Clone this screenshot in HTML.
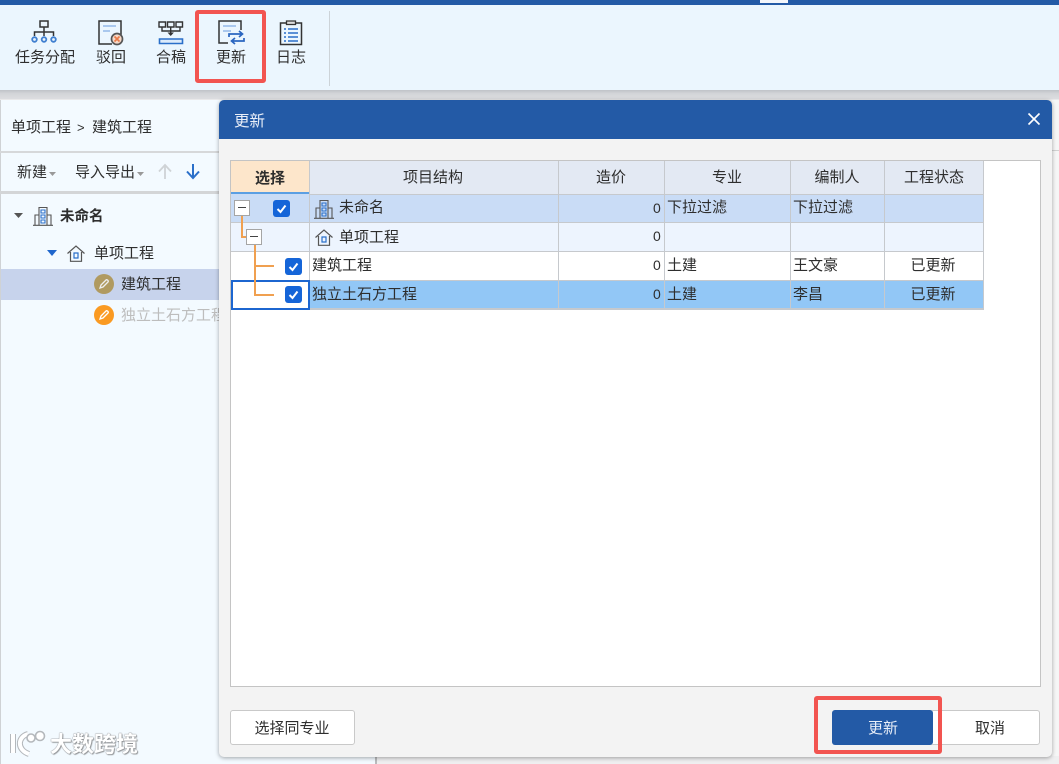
<!DOCTYPE html>
<html lang="zh"><head><meta charset="utf-8"><title>更新</title>
<style>
*{box-sizing:border-box}
html,body{margin:0;padding:0}
body{width:1059px;height:764px;position:relative;overflow:hidden;background:#e9e9ea;font-family:"Liberation Sans","Noto Sans CJK SC",sans-serif;color:#333}
#p{position:absolute;left:0;top:0;width:1059px;height:764px;overflow:hidden;filter:blur(.35px)}
.a{position:absolute}
.t{position:absolute;white-space:nowrap;font-size:15px;line-height:20px;color:#2e2e2e}
.c{text-align:center;transform:translateX(-50%)}
svg{position:absolute;overflow:visible}
.chk{position:absolute;width:17px;height:17px;background:#1565d8;border-radius:3px}
.chk svg{left:0;top:0}
.exp{position:absolute;width:16px;height:16px;background:#fff;border:1px solid #a5a5a5}
.exp i{position:absolute;left:3px;top:6px;width:8px;height:1px;background:#444}
.l{position:absolute;background:#f0a050}
</style></head><body><div id="p">

<!-- top bar -->
<div class="a" style="left:0;top:0;width:1059px;height:5px;background:#235aa6"></div>
<div class="a" style="left:760px;top:0;width:28px;height:3px;background:#f3f6fb"></div>
<div class="a" style="left:0;top:5px;width:1059px;height:85px;background:#ebf6fe"></div>
<div class="a" style="left:0;top:90px;width:1059px;height:9px;background:linear-gradient(#bfc3c8,#d3d5d8 40%,#dcdde0)"></div>
<div class="a" style="left:329px;top:11px;width:1px;height:75px;background:#ccd3d8"></div>

<!-- toolbar icons -->
<svg style="left:30px;top:20px" width="30" height="24" viewBox="0 0 30 24" fill="none">
<path d="M10 1h8v6h-8zM14 7v5M4.500 16v-4h19v4M14 12v4" stroke="#333" stroke-width="1.500"/>
<circle cx="4.500" cy="19.500" r="2.300" stroke="#3f7fd0" stroke-width="1.800"/><circle cx="14" cy="19.500" r="2.300" stroke="#3f7fd0" stroke-width="1.800"/><circle cx="23.500" cy="19.500" r="2.300" stroke="#3f7fd0" stroke-width="1.800"/></svg>
<svg style="left:98px;top:20px" width="28" height="26" viewBox="0 0 28 26" fill="none">
<path d="M14 24H1V1h22v14" stroke="#333" stroke-width="1.500"/>
<path d="M5 5h13v2H5z" fill="#a9c8ee"/><path d="M5 10h7v2H5z" fill="#a9c8ee"/>
<circle cx="19" cy="19" r="5.500" fill="#f6d9c8" stroke="#555" stroke-width="1.700"/><path d="M16.500 16.500l5 5M21.500 16.500l-5 5" stroke="#ea7b48" stroke-width="1.600"/></svg>
<svg style="left:158px;top:21px" width="26" height="24" viewBox="0 0 26 24" fill="none">
<path d="M1 1h6.500v5H1zM9.500 1H16v5H9.500zM18 1h6.500v5H18zM4 6v4h18V6M12.700 6v8" stroke="#333" stroke-width="1.400"/>
<path d="M9.500 11.500l3.200 3.500 3.200-3.500z" fill="#333"/>
<path d="M1.500 18h23v4.500h-23z" fill="#dcebfb" stroke="#2a6fc9" stroke-width="1.600"/></svg>
<svg style="left:218px;top:20px" width="28" height="26" viewBox="0 0 28 26" fill="none">
<path d="M10 23H1V1h22v9" stroke="#333" stroke-width="1.500"/>
<path d="M5 5h13v2H5z" fill="#a9c8ee"/><path d="M5 10h8v2H5z" fill="#a9c8ee"/>
<path d="M11 17v-3h13M21 11l3.500 3-3.500 3M26 18v3H14M17 18l-3.500 3 3.500 3" stroke="#2a66c0" stroke-width="1.700"/></svg>
<svg style="left:279px;top:20px" width="25" height="26" viewBox="0 0 25 26" fill="none">
<path d="M7 3H1.500v21.500h21V3H17" stroke="#333" stroke-width="1.500"/><path d="M7.500 1h9v3.500h-9z" fill="#ddd" stroke="#333" stroke-width="1.300"/>
<path d="M5 9h2M9 9h10M5 13h2M9 13h10M5 17h2M9 17h10M5 21h2M9 21h10" stroke="#2a6fc9" stroke-width="1.500"/></svg>

<div class="t c" style="left:45px;top:48px">任务分配</div>
<div class="t c" style="left:111px;top:48px">驳回</div>
<div class="t c" style="left:171px;top:48px">合稿</div>
<div class="t c" style="left:231px;top:48px">更新</div>
<div class="t c" style="left:291px;top:48px">日志</div>
<div class="a" style="left:195px;top:10px;width:71px;height:73px;border:4px solid #f25450;border-radius:3px"></div>

<!-- left panel -->
<div class="a" style="left:0;top:100px;width:375px;height:664px;background:#f3faff;border-left:1px solid #cfd2d5"></div>
<div class="a" style="left:0;top:151px;width:219px;height:2px;background:#d6d8da"></div>
<div class="a" style="left:0;top:191px;width:219px;height:3px;background:#d3d5d7"></div>
<div class="t" style="left:11px;top:118px">单项工程</div>
<div class="t" style="left:77px;top:118px;font-size:13px">&gt;</div>
<div class="t" style="left:92px;top:118px">建筑工程</div>
<div class="t" style="left:17px;top:163px">新建</div>
<svg style="left:49px;top:172px" width="7" height="4"><path d="M0 0h7L3.500 4z" fill="#999"/></svg>
<div class="t" style="left:75px;top:163px">导入导出</div>
<svg style="left:137px;top:172px" width="7" height="4"><path d="M0 0h7L3.500 4z" fill="#999"/></svg>
<svg style="left:158px;top:164px" width="14" height="15" fill="none"><path d="M7 15V1M1 7.500L7 1l6 6.500" stroke="#cfd3d6" stroke-width="1.800"/></svg>
<svg style="left:186px;top:164px" width="14" height="15" fill="none"><path d="M7 0v14M1 7.500L7 14l6-6.500" stroke="#2a6fc9" stroke-width="2"/></svg>

<svg style="left:14px;top:213px" width="9" height="5"><path d="M0 0h9L4.500 5z" fill="#555"/></svg>
<svg style="left:33px;top:206px" width="20" height="20" fill="none" viewBox="0 0 20 20"><path d="M6 19V1.500h8V19M6 9H2v10M14 9h4v10M0 19.300h20" stroke="#555" stroke-width="1.100"/><path d="M8 4h4v3H8zM8 9h4v3H8zM8 14h4v3H8z" stroke="#2a6fc9" stroke-width="1.100"/></svg>
<div class="t" style="left:60px;top:207px;font-weight:700;font-size:14.500px">未命名</div>
<svg style="left:47px;top:250px" width="10" height="6"><path d="M0 0h10L5 6z" fill="#1f66cc"/></svg>
<svg style="left:67px;top:245px" width="18" height="17" fill="none" viewBox="0 0 18 17"><path d="M0.500 8.500L9 1l8.500 7.500M3.500 7v9.300h11V7" stroke="#555" stroke-width="1.200"/><path d="M7 8h4v5H7z" stroke="#2a6fc9" stroke-width="1.200"/></svg>
<div class="t" style="left:94px;top:244px">单项工程</div>
<div class="a" style="left:1px;top:269px;width:218px;height:31px;background:#c7d3ec"></div>
<svg style="left:94px;top:274px" width="20" height="20" viewBox="0 0 20 20" fill="none"><circle cx="10" cy="10" r="10" fill="#b09a60"/><path d="M6 14l1-3 5-5c1-1 3 1 2 2l-5 5z" stroke="#eee" stroke-width="1.300"/></svg>
<div class="t" style="left:121px;top:275px;color:#2f2f2f">建筑工程</div>
<svg style="left:94px;top:305px" width="20" height="20" viewBox="0 0 20 20" fill="none"><circle cx="10" cy="10" r="10" fill="#fa9a22"/><path d="M6 14l1-3 5-5c1-1 3 1 2 2l-5 5z" stroke="#fff" stroke-width="1.300"/></svg>
<div class="a" style="left:121px;top:306px;width:98px;height:20px;overflow:hidden"><div class="t" style="left:0;top:0;color:#bdbdbd">独立土石方工程</div></div>

<!-- right side backdrop -->
<div class="a" style="left:375px;top:100px;width:684px;height:664px;background:#efeff0;border-left:2px solid #b9bbbd"></div>
<div class="a" style="left:1052px;top:100px;width:7px;height:656px;background:#f6f6f6"></div>
<div class="a" style="left:1052px;top:150px;width:7px;height:1px;background:#d2d2d2"></div>

<!-- watermark -->
<svg style="left:8px;top:729px" width="42" height="28" viewBox="0 0 42 28" fill="none">
<path d="M5 5v19M20 5C9 8 9 21 21 25" stroke="#b4b8bc" stroke-width="6"/>
<path d="M5 5v19M20 5C9 8 9 21 21 25" stroke="#fff" stroke-width="4"/>
<circle cx="23" cy="9" r="4" fill="#fff" stroke="#b4b8bc" stroke-width="1.600"/><circle cx="32" cy="7" r="4.500" fill="#fff" stroke="#b4b8bc" stroke-width="1.600"/></svg>
<div class="t" style="left:50px;top:733px;font-size:22px;line-height:24px;font-weight:700;color:#fff;text-shadow:0 0 1px #808386,0 0 1px #808386,1px 1px 1px #9a9da0">大数跨境</div>

<!-- dialog -->
<div class="a" style="left:219px;top:100px;width:833px;height:657px;background:#f3f3f3;border-radius:5px;box-shadow:0 1px 4px rgba(0,0,0,.35)"></div>
<div class="a" style="left:219px;top:100px;width:833px;height:39px;background:#235aa6;border-radius:5px 5px 0 0"></div>
<div class="t" style="left:234px;top:112px;color:#e8eef8;font-size:15.500px">更新</div>
<svg style="left:1028px;top:113px" width="12" height="12" fill="none"><path d="M0.500 0.500l11 11M11.500 0.500l-11 11" stroke="#fff" stroke-width="1.600"/></svg>

<!-- grid -->
<div class="a" style="left:230px;top:160px;width:811px;height:527px;background:#fff;border:1px solid #c4c4c4"></div>
<div class="a" style="left:231px;top:161px;width:752px;height:33px;background:#e3e9f3"></div>
<div class="a" style="left:231px;top:161px;width:78px;height:33px;background:#fde6cb;border-bottom:2px solid #5b9fe3"></div>
<div class="a" style="left:231px;top:194px;width:752px;height:29px;background:#c9dcf6"></div>
<div class="a" style="left:231px;top:223px;width:752px;height:29px;background:#edf4fe"></div>
<div class="a" style="left:231px;top:252px;width:752px;height:29px;background:#fff"></div>
<div class="a" style="left:309px;top:281px;width:674px;height:28px;background:#92c7f6"></div>
<!-- grid lines -->
<div class="a" style="left:309px;top:161px;width:1px;height:148px;background:#c6c9cd"></div>
<div class="a" style="left:558px;top:161px;width:1px;height:148px;background:#c6c9cd"></div>
<div class="a" style="left:664px;top:161px;width:1px;height:148px;background:#c6c9cd"></div>
<div class="a" style="left:790px;top:161px;width:1px;height:148px;background:#c6c9cd"></div>
<div class="a" style="left:884px;top:161px;width:1px;height:148px;background:#c6c9cd"></div>
<div class="a" style="left:983px;top:161px;width:1px;height:149px;background:#c6c9cd"></div>
<div class="a" style="left:309px;top:194px;width:675px;height:1px;background:#c6c9cd"></div>
<div class="a" style="left:231px;top:222px;width:753px;height:1px;background:#c6c9cd"></div>
<div class="a" style="left:231px;top:251px;width:753px;height:1px;background:#c6c9cd"></div>
<div class="a" style="left:231px;top:280px;width:753px;height:1px;background:#c6c9cd"></div>
<div class="a" style="left:231px;top:308px;width:753px;height:2px;background:#c6c9cd"></div>
<!-- selection cell -->
<div class="a" style="left:231px;top:280px;width:79px;height:30px;background:#fff;border:2px solid #1c66d0"></div>

<!-- header text -->
<div class="t c" style="left:270px;top:169px;font-weight:700">选择</div>
<div class="t c" style="left:433px;top:168px">项目结构</div>
<div class="t c" style="left:611px;top:168px">造价</div>
<div class="t c" style="left:727px;top:168px">专业</div>
<div class="t c" style="left:837px;top:168px">编制人</div>
<div class="t c" style="left:934px;top:168px">工程状态</div>

<!-- tree lines -->
<div class="l" style="left:241px;top:215px;width:1.500px;height:22px"></div>
<div class="l" style="left:241px;top:236px;width:6px;height:1.500px"></div>
<div class="l" style="left:254px;top:244px;width:1.500px;height:50px"></div>
<div class="l" style="left:254px;top:265px;width:20px;height:1.500px"></div>
<div class="l" style="left:254px;top:294px;width:20px;height:1.500px"></div>
<div class="exp" style="left:234px;top:200px"><i></i></div>
<div class="exp" style="left:246px;top:229px"><i></i></div>

<div class="chk" style="left:273px;top:200px"><svg width="17" height="17" fill="none"><path d="M4.500 9l3 3 5-6.500" stroke="#fff" stroke-width="2"/></svg></div>
<div class="chk" style="left:285px;top:258px"><svg width="17" height="17" fill="none"><path d="M4.500 9l3 3 5-6.500" stroke="#fff" stroke-width="2"/></svg></div>
<div class="chk" style="left:285px;top:286px"><svg width="17" height="17" fill="none"><path d="M4.500 9l3 3 5-6.500" stroke="#fff" stroke-width="2"/></svg></div>

<!-- row content -->
<svg style="left:314px;top:199px" width="20" height="20" fill="none" viewBox="0 0 20 20"><path d="M6 19V1.500h8V19M6 9H2v10M14 9h4v10M0 19.300h20" stroke="#555" stroke-width="1.100"/><path d="M8 4h4v3H8zM8 9h4v3H8zM8 14h4v3H8z" stroke="#2a6fc9" stroke-width="1.100"/></svg>
<div class="t" style="left:339px;top:198px">未命名</div>
<svg style="left:315px;top:229px" width="18" height="17" fill="none" viewBox="0 0 18 17"><path d="M0.500 8.500L9 1l8.500 7.500M3.500 7v9.300h11V7" stroke="#555" stroke-width="1.200"/><path d="M7 8h4v5H7z" stroke="#2a6fc9" stroke-width="1.200"/></svg>
<div class="t" style="left:339px;top:228px">单项工程</div>
<div class="t" style="left:312px;top:256px">建筑工程</div>
<div class="t" style="left:312px;top:285px">独立土石方工程</div>

<div class="t" style="left:653px;top:198px;font-size:14px">0</div>
<div class="t" style="left:653px;top:226px;font-size:14px">0</div>
<div class="t" style="left:653px;top:255px;font-size:14px">0</div>
<div class="t" style="left:653px;top:284px;font-size:14px">0</div>

<div class="t" style="left:667px;top:198px">下拉过滤</div>
<div class="t" style="left:793px;top:198px">下拉过滤</div>
<div class="t" style="left:667px;top:256px">土建</div>
<div class="t" style="left:793px;top:256px">王文豪</div>
<div class="t c" style="left:933px;top:256px">已更新</div>
<div class="t" style="left:667px;top:285px">土建</div>
<div class="t" style="left:793px;top:285px">李昌</div>
<div class="t c" style="left:933px;top:285px">已更新</div>

<!-- footer buttons -->
<div class="a" style="left:230px;top:710px;width:125px;height:35px;background:#fff;border:1px solid #c9c9c9;border-radius:3px"></div>
<div class="t c" style="left:292px;top:719px">选择同专业</div>
<div class="a" style="left:930px;top:710px;width:110px;height:35px;background:#fff;border:1px solid #c9c9c9;border-radius:3px"></div>
<div class="t c" style="left:990px;top:719px">取消</div>
<div class="a" style="left:832px;top:710px;width:101px;height:35px;background:#235aa6;border-radius:3px"></div>
<div class="t c" style="left:883px;top:719px;color:#e8eef8">更新</div>
<div class="a" style="left:814px;top:696px;width:128px;height:58px;border:4px solid #f25450;border-radius:3px"></div>
</div></body></html>
